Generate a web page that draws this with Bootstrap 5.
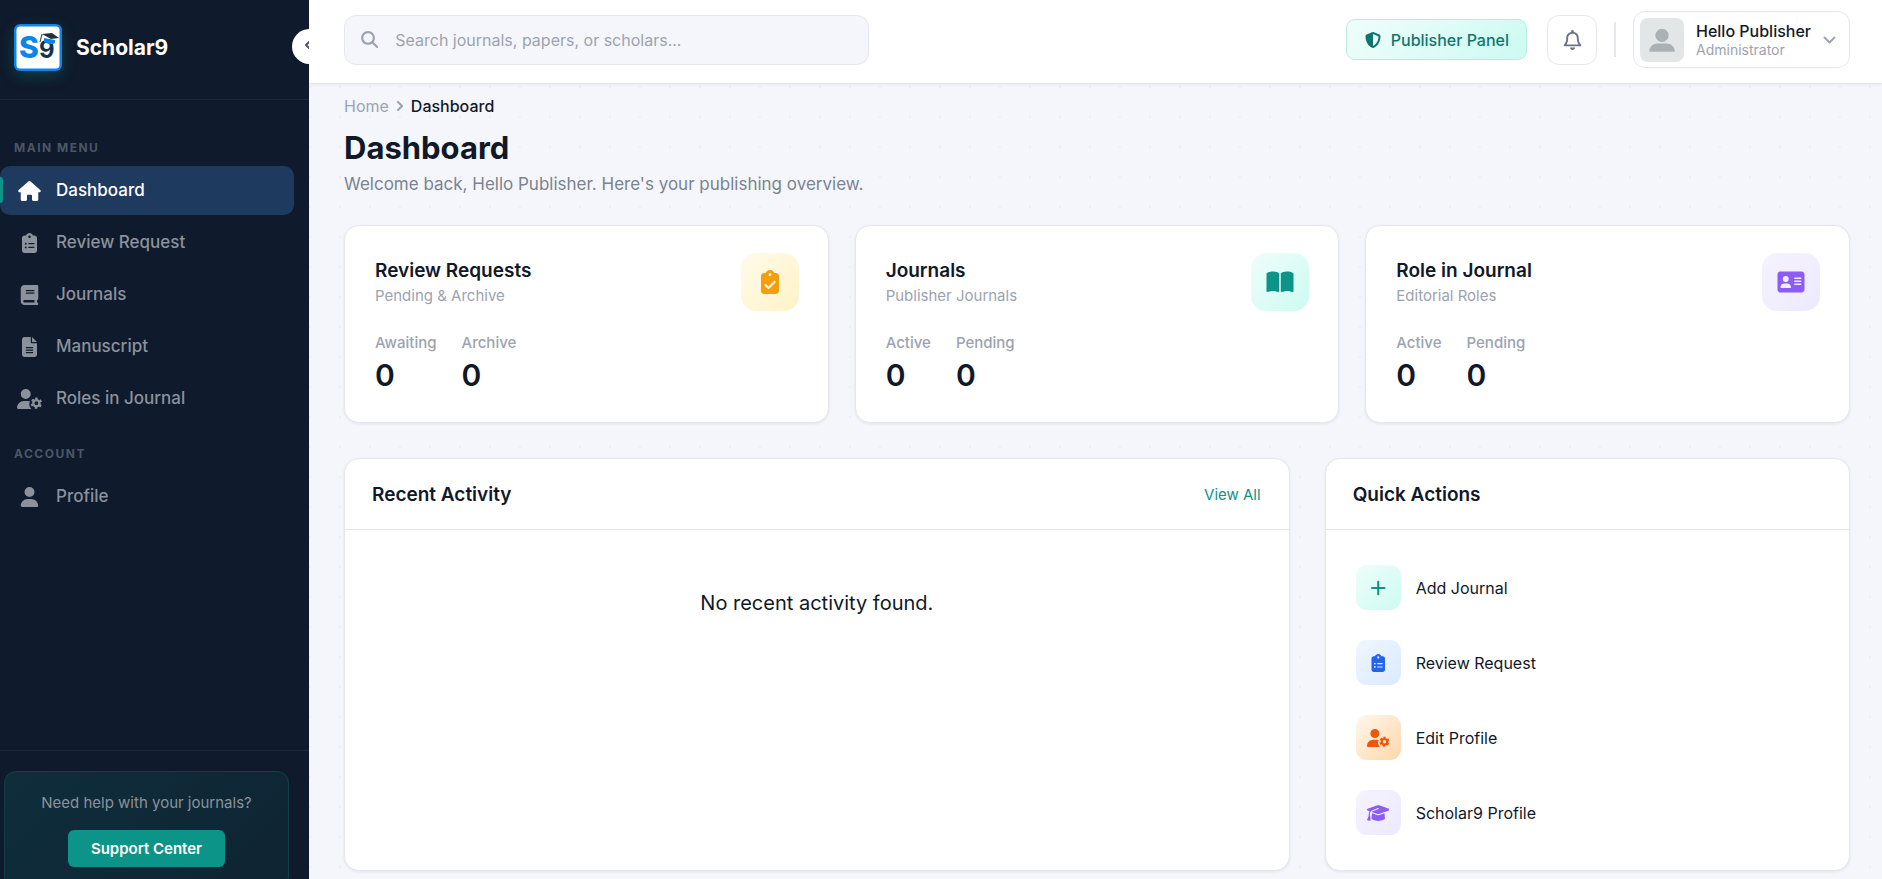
<!DOCTYPE html>
<html lang="en">
<head>
<meta charset="utf-8">
<meta name="viewport" content="width=device-width, initial-scale=1">
<title>Scholar9 – Dashboard</title>
<link href="https://cdn.jsdelivr.net/npm/bootstrap@5.3.0/dist/css/bootstrap.min.css" rel="stylesheet">
<style>
  :root { --ink: #111827; --muted: #9ca3af; --line: #e5e7eb; --teal: #0d9488; --navy: #0f1a2c; }
  body {
    font-family: Inter, "Liberation Sans", sans-serif; font-size: 16px; color: var(--ink);
    background: #f4f6fb radial-gradient(circle, rgba(15,26,44,.03) 1px, transparent 1px) -5px 12px / 30px 30px;
  }
  a { text-decoration: none; }
  .ico { width: 1.25em; height: 1em; fill: currentColor; flex: none; display: block; }

  /* Sidebar */
  .sidebar { width: 309px; height: calc(100vh + 30px); background: var(--navy); flex: none; }
  .brand { height: 100px; padding: 0 14px 4px; gap: 14px; border-bottom: 1px solid #1c283a; }
  .brand-mark { width: 48px; height: 47px; border-radius: 6px; box-shadow: 0 5px 15px rgba(13,148,136,.3); }
  .brand-name { font-size: 21px; font-weight: 700; line-height: 28px; color: #fff; }
  .collapse-btn {
    top: 29px; right: -18px; width: 35px; height: 35px; border: 0; border-radius: 50%;
    background: #fff; color: #4b5563; padding: 0 0 4px 13px;
  }
  .side-nav { padding-top: 40px; }
  .side-label { font-size: 12px; line-height: 16px; font-weight: 700; letter-spacing: 1.5px; color: #4c5665; padding-left: 14px; margin: 0 0 10px; }
  .side-list { gap: 3px; margin-bottom: 23px; }
  .side-item {
    height: 49px; margin-right: 15px; padding-left: 17px; gap: 14px; border-radius: 10px;
    font-size: 17px; font-weight: 500; color: #8b929c; position: relative;
  }
  .side-item .ico { font-size: 20px; }
  .side-item.current { background: #1e3a5f; color: #fff; }
  .side-item.current::before {
    content: ""; position: absolute; left: 0; top: 11px; bottom: 12px; width: 3px;
    background: var(--teal); border-radius: 0 3px 3px 0;
  }
  .side-foot { border-top: 1px solid #1c283a; padding: 20px 20px 20px 4px; }
  .help-box {
    border: 1px solid #113f49; border-radius: 12px; padding: 21px 15px;
    background: linear-gradient(135deg, rgba(13,148,136,.16), rgba(13,148,136,.08));
    color: #8b929c; font-size: 15px; line-height: 20px;
  }
  .help-btn { width: 157px; height: 37px; margin-top: 17px; border-radius: 6px; background: var(--teal); color: #fff; font-size: 15px; font-weight: 600; line-height: 35px; padding: 0; }

  /* Top bar */
  .topbar { background: #fff; border-bottom: 1px solid var(--line); box-shadow: 0 1px 3px rgba(15,26,44,.06); padding: 11px 32px 15px 35px; gap: 20px; }
  .search { width: 525px; height: 50px; border: 1px solid var(--line); border-radius: 12px; background: #f4f6fb; padding-left: 14px; gap: 15px; color: var(--muted); }
  .search .ico { font-size: 17px; }
  .search input { border: 0; background: none; outline: 0; font-size: 16px; color: var(--ink); padding: 0; }
  .search input::placeholder { color: var(--muted); opacity: 1; }
  .panel-btn {
    height: 41px; padding: 0 17px 0 16px; gap: 8px; border: 1px solid #b9ebe3; border-radius: 9px;
    background: linear-gradient(135deg, #f0fdfa, #ccfbf1); color: #0f766e; font-size: 16px; font-weight: 500;
  }
  .bell-btn { width: 50px; height: 50px; border: 1px solid var(--line); border-radius: 12px; background: #fff; color: #6b7280; font-size: 20px; }
  .rule { width: 2px; height: 35px; background: var(--line); margin: 0 -3px; }
  .user-btn { height: 57px; border: 1px solid var(--line); border-radius: 12px; background: #fff; padding: 0 13px 0 6px; gap: 12px; }
  .avatar { width: 44px; height: 44px; border-radius: 8px; background: #e3e6e6; }
  .user-name { font-size: 16px; line-height: 20px; font-weight: 500; color: var(--ink); }
  .user-role { font-size: 14px; line-height: 18px; color: var(--muted); }

  /* Page */
  .page { padding: 10px 32px 9px 35px; }
  .crumbs { font-size: 16px; line-height: 24px; gap: 8px; }
  .crumbs a, .crumbs svg { color: var(--muted); }
  .crumb-here { font-weight: 500; }
  .page-title { font-size: 31px; line-height: 36px; font-weight: 700; margin: 12px 0 6px; }
  .page-sub { font-size: 17px; line-height: 24px; color: #7b8390; margin: 0 0 29px; }
  .panel { background: #fff; border: 1px solid var(--line); border-radius: 15px; box-shadow: 0 1px 3px rgba(15,26,44,.08); }
  .stats { --bs-gutter-x: 26px; margin-bottom: 35px; }
  .stat { padding: 27px 29px 29px 30px; }
  .stat-title { font-size: 19px; line-height: 28px; font-weight: 600; margin: 0; }
  .stat-sub { font-size: 15px; line-height: 22px; color: var(--muted); margin: 0; }
  .tile { width: 58px; height: 58px; border-radius: 15px; font-size: 24px; }
  .tile-sm { width: 45px; height: 45px; border-radius: 11px; font-size: 18px; }
  .figures { gap: 25px; margin: 22px 0 0; }
  .figures dt { font-size: 15px; line-height: 20px; font-weight: 500; color: var(--muted); }
  .figures dd { font-size: 30px; line-height: 36px; font-weight: 600; margin: 4px 0 0; }
  .t-amber { background: linear-gradient(135deg, #fffbeb, #fef3c7); color: #f59e0b; }
  .t-teal { background: linear-gradient(135deg, #f0fdfa, #ccfbf1); color: var(--teal); }
  .t-violet { background: linear-gradient(135deg, #f5f3ff, #ede9fe); color: #8b5cf6; }
  .t-blue { background: linear-gradient(135deg, #eff6ff, #dbeafe); color: #2563eb; }
  .t-orange { background: linear-gradient(135deg, #fff7ed, #fed7aa); color: #ea580c; }
  .lower { display: grid; grid-template-columns: 1.8fr 1fr; gap: 35px; }
  .panel-head { height: 71px; padding: 2px 28px 0 27px; border-bottom: 1px solid var(--line); }
  .panel-head h2 { font-size: 19px; line-height: 26px; font-weight: 600; margin: 0; }
  .panel-head a { font-size: 15px; line-height: 26px; color: var(--teal); }
  .empty { font-size: 20px; line-height: 24px; padding-top: 61px; }
  .actions { padding: 20px; }
  .action { padding: 15px 10px; gap: 15px; font-size: 16px; color: var(--ink); }
</style>
</head>
<body>
<svg class="d-none" aria-hidden="true">
  <symbol id="i-house" viewBox="0 0 576 512"><path d="M575.8 255.5c0 18-15 32.1-32 32.1h-32l.7 160.2c0 2.7-.2 5.4-.5 8.1V472c0 22.1-17.9 40-40 40H392c-22.1 0-40-17.9-40-40V384c0-17.7-14.3-32-32-32H256c-17.7 0-32 14.3-32 32v88c0 22.1-17.9 40-40 40H104c-22.1 0-40-17.9-40-40V287.6H32c-18 0-32-14-32-32.1c0-9 3-17 10-24L266.4 8c7-7 15-8 22-8s15 2 21 7L564.8 231.5c8 7 12 15 11 24z"/></symbol>
  <symbol id="i-list" viewBox="0 0 384 512"><path fill-rule="evenodd" d="M192 0c-41.8 0-77.4 26.7-90.5 64H64C28.7 64 0 92.7 0 128V448c0 35.3 28.7 64 64 64H320c35.3 0 64-28.7 64-64V128c0-35.3-28.7-64-64-64H282.5C269.4 26.7 233.8 0 192 0zm0 64a32 32 0 1 1 0 64 32 32 0 1 1 0-64zM72 272a24 24 0 1 1 48 0 24 24 0 1 1-48 0zm104-16H304c8.8 0 16 7.2 16 16s-7.2 16-16 16H176c-8.8 0-16-7.2-16-16s7.2-16 16-16zM72 368a24 24 0 1 1 48 0 24 24 0 1 1-48 0zm88 0c0-8.8 7.2-16 16-16H304c8.8 0 16 7.2 16 16s-7.2 16-16 16H176c-8.8 0-16-7.2-16-16z"/></symbol>
  <symbol id="i-check" viewBox="0 0 384 512"><path fill-rule="evenodd" d="M192 0c-41.8 0-77.4 26.7-90.5 64H64C28.7 64 0 92.7 0 128V448c0 35.3 28.7 64 64 64H320c35.3 0 64-28.7 64-64V128c0-35.3-28.7-64-64-64H282.5C269.4 26.7 233.8 0 192 0zm0 64a32 32 0 1 1 0 64 32 32 0 1 1 0-64zM305 273L177 401c-9.4 9.4-24.6 9.4-33.9 0L79 337c-9.4-9.4-9.4-24.6 0-33.9s24.6-9.4 33.9 0l47 47L271 239c9.4-9.4 24.6-9.4 33.9 0s9.4 24.6 0 33.9z"/></symbol>
  <symbol id="i-book" viewBox="0 0 448 512"><path fill-rule="evenodd" d="M96 0C43 0 0 43 0 96V416c0 53 43 96 96 96H416c17.7 0 32-14.3 32-32s-14.3-32-32-32V384c17.7 0 32-14.3 32-32V32c0-17.7-14.3-32-32-32H96zm0 384H352v64H96c-17.7 0-32-14.3-32-32s14.3-32 32-32zm32-240c0-8.8 7.2-16 16-16H336c8.8 0 16 7.2 16 16s-7.2 16-16 16H144c-8.8 0-16-7.2-16-16zm16 48H336c8.8 0 16 7.2 16 16s-7.2 16-16 16H144c-8.8 0-16-7.2-16-16s7.2-16 16-16z"/></symbol>
  <symbol id="i-file" viewBox="0 0 384 512"><path fill-rule="evenodd" d="M64 0C28.7 0 0 28.7 0 64V448c0 35.3 28.7 64 64 64H320c35.3 0 64-28.7 64-64V160H256c-17.7 0-32-14.3-32-32V0H64zM256 0V128H384L256 0zM112 256H272c8.8 0 16 7.2 16 16s-7.2 16-16 16H112c-8.8 0-16-7.2-16-16s7.2-16 16-16zm0 64H272c8.8 0 16 7.2 16 16s-7.2 16-16 16H112c-8.8 0-16-7.2-16-16s7.2-16 16-16zm0 64H272c8.8 0 16 7.2 16 16s-7.2 16-16 16H112c-8.8 0-16-7.2-16-16s7.2-16 16-16z"/></symbol>
  <symbol id="i-user" viewBox="0 0 448 512"><path d="M224 256A128 128 0 1 0 224 0a128 128 0 1 0 0 256zm-45.7 48C79.8 304 0 383.8 0 482.3C0 498.7 13.3 512 29.7 512H418.3c16.4 0 29.7-13.3 29.7-29.7C448 383.8 368.2 304 269.7 304H178.3z"/></symbol>
  <symbol id="i-gear" viewBox="0 0 640 512"><path d="M224 256A128 128 0 1 0 224 0a128 128 0 1 0 0 256zM178.3 304h91.4c22 0 43 4 62 11a172 172 0 0 0 38 197H29.7C13.3 512 0 498.7 0 482.3C0 383.8 79.8 304 178.3 304z"/><circle cx="496" cy="363" r="79" fill="none" stroke="currentColor" stroke-width="62"/><circle cx="496" cy="363" r="122" fill="none" stroke="currentColor" stroke-width="46" pathLength="12" stroke-dasharray="1 1" transform="rotate(-105 496 363)"/></symbol>
  <symbol id="i-open" viewBox="0 0 576 512"><path d="M249.6 471.5c10.8 3.8 22.4-4.1 22.4-15.5V78.6c0-4.2-1.6-8.4-5-11C247.4 52 202.4 32 144 32C93.5 32 46.3 45.3 18.1 56.1C6.8 60.5 0 71.7 0 83.8V454.1c0 11.9 12.8 20.2 24.1 16.5C55.6 460.1 105.5 448 144 448c33.9 0 79 14 105.6 23.5zm76.8 0C353 462 398.1 448 432 448c38.5 0 88.4 12.1 119.9 22.6c11.3 3.8 24.1-4.6 24.1-16.5V83.8c0-12.1-6.8-23.3-18.1-27.6C529.7 45.3 482.5 32 432 32c-58.4 0-103.4 20-123 35.6c-3.3 2.6-5 6.8-5 11V456c0 11.4 11.7 19.3 22.4 15.5z"/></symbol>
  <symbol id="i-card" viewBox="0 0 576 512"><path fill-rule="evenodd" d="M64 32C28.7 32 0 60.7 0 96V416c0 35.3 28.7 64 64 64H512c35.3 0 64-28.7 64-64V96c0-35.3-28.7-64-64-64H64zm80 256h64c44.2 0 80 35.8 80 80c0 8.8-7.2 16-16 16H80c-8.8 0-16-7.2-16-16c0-44.2 35.8-80 80-80zm-32-96a64 64 0 1 1 128 0 64 64 0 1 1-128 0zm256-32H496c8.8 0 16 7.2 16 16s-7.2 16-16 16H368c-8.8 0-16-7.2-16-16s7.2-16 16-16zm0 64H496c8.8 0 16 7.2 16 16s-7.2 16-16 16H368c-8.8 0-16-7.2-16-16s7.2-16 16-16zm0 64H496c8.8 0 16 7.2 16 16s-7.2 16-16 16H368c-8.8 0-16-7.2-16-16s7.2-16 16-16z"/></symbol>
  <symbol id="i-shield" viewBox="0 0 512 512"><path fill-rule="evenodd" d="M256 0c4.6 0 9.2 1 13.4 2.9L457.7 82.8c22 9.3 38.4 31 38.3 57.2c-.5 99.2-41.3 280.7-213.6 363.2c-16.7 8-36.1 8-52.8 0C57.3 420.7 16.5 239.2 16 140c-.1-26.2 16.3-47.9 38.3-57.2L242.7 2.9C246.8 1 251.4 0 256 0zm0 66.8V444.8C394 378 431.1 230.1 432 141.4L256 66.8z"/></symbol>
  <symbol id="i-bell" viewBox="0 0 448 512"><path fill-rule="evenodd" d="M224 0c-17.7 0-32 14.3-32 32V49.9C119.5 61.4 64 124.2 64 200v33.4c0 45.4-15.5 89.5-43.8 124.9L5.3 377c-5.8 7.2-6.9 17.1-2.9 25.4S14.8 416 24 416H424c9.2 0 17.6-5.3 21.6-13.6s2.9-18.2-2.9-25.4l-14.9-18.6C399.5 322.9 384 278.8 384 233.4V200c0-75.8-55.5-138.6-128-150.1V32c0-17.7-14.3-32-32-32zm0 96h8c57.4 0 104 46.6 104 104v33.4c0 47.9 13.9 94.6 39.7 134.6H72.3C98.1 328 112 281.3 112 233.4V200c0-57.4 46.6-104 104-104h8zm64 352H160c0 17 6.7 33.3 18.7 45.3s28.3 18.7 45.3 18.7s33.3-6.7 45.3-18.7s18.7-28.3 18.7-45.3z"/></symbol>
  <symbol id="i-search" viewBox="0 0 512 512"><path fill-rule="evenodd" d="M416 208c0 45.9-14.9 88.3-40 122.7L502.6 457.4c12.5 12.5 12.5 32.8 0 45.3s-32.8 12.5-45.3 0L330.7 376c-34.4 25.2-76.8 40-122.7 40C93.1 416 0 322.9 0 208S93.1 0 208 0S416 93.1 416 208zM208 352a144 144 0 1 0 0-288 144 144 0 1 0 0 288z"/></symbol>
  <symbol id="i-plus" viewBox="0 0 448 512"><path d="M224 80V432M48 256H400" fill="none" stroke="currentColor" stroke-width="60" stroke-linecap="round"/></symbol>
  <symbol id="i-cap" viewBox="0 0 640 512"><path d="M320 32c-8.1 0-16.1 1.4-23.7 4.1L15.8 137.4C6.3 140.9 0 149.9 0 160s6.3 19.1 15.8 22.6l57.9 20.9C57.3 229.3 48 259.8 48 291.9v28.1c0 28.4-10.8 57.7-22.3 80.8c-6.5 13-13.9 25.8-22.5 37.6C0 442.7-.9 448.3 .9 453.4s6 8.9 11.2 10.2l64 16c4.2 1.1 8.7 .3 12.4-2s6.3-6.1 7.1-10.4c8.6-42.8 4.3-81.2-2.1-108.7C90.3 344.3 86 329.8 80 316.5V291.9c0-30.2 10.2-58.7 27.9-81.5c12.9-15.5 29.6-28 49.2-35.7l157-61.7c8.2-3.2 17.5 .8 20.7 9s-.8 17.5-9 20.7l-157 61.7c-12.4 4.9-23.3 12.4-32.2 21.6l159.6 57.6c7.6 2.7 15.6 4.1 23.7 4.1s16.1-1.4 23.7-4.1L624.2 182.6c9.5-3.4 15.8-12.5 15.8-22.6s-6.3-19.1-15.8-22.6L343.7 36.1C336.1 33.4 328.1 32 320 32zM128 408c0 35.3 86 72 192 72s192-36.7 192-72L496.7 262.6 354.5 314c-11.1 4-22.8 6-34.5 6s-23.5-2-34.5-6L143.3 262.6 128 408z"/></symbol>
</svg>

<div class="d-flex vh-100 overflow-hidden">
  <aside class="sidebar d-flex flex-column position-relative overflow-hidden">
    <div class="brand d-flex align-items-center">
      <svg class="brand-mark" viewBox="0 0 48 47" role="img" aria-label="Scholar9 logo">
        <rect x="1" y="1" width="46" height="45" rx="5" fill="#fff" stroke="#0b84ee" stroke-width="3"/>
        <text x="5" y="34" font-family="Inter" font-weight="800" font-size="30" fill="#0b84ee">S</text>
        <text x="25" y="34" font-family="Inter" font-weight="700" font-size="24" fill="#16324a">9</text>
        <path d="M30 14l11 2v3c-3 2-8 1-11-1z" fill="#0b84ee"/>
        <path d="M28 10l10-1 7 5-8 1z" fill="#22333f"/>
        <path d="M28 10l-2 8" stroke="#22333f" stroke-width="1" fill="none"/>
      </svg>
      <span class="brand-name">Scholar9</span>
    </div>
    <button class="collapse-btn position-absolute d-flex align-items-center" type="button" aria-label="Collapse sidebar">
      <svg width="7" height="8" viewBox="0 0 7 8" fill="none" stroke="currentColor" stroke-width="2" stroke-linecap="round" stroke-linejoin="round"><path d="M4 1L1 4l3 3"/></svg>
    </button>
    <nav class="side-nav flex-grow-1">
      <p class="side-label">MAIN MENU</p>
      <div class="side-list d-flex flex-column">
        <a class="side-item current d-flex align-items-center" href="#"><svg class="ico"><use href="#i-house"/></svg>Dashboard</a>
        <a class="side-item d-flex align-items-center" href="#"><svg class="ico"><use href="#i-list"/></svg>Review Request</a>
        <a class="side-item d-flex align-items-center" href="#"><svg class="ico"><use href="#i-book"/></svg>Journals</a>
        <a class="side-item d-flex align-items-center" href="#"><svg class="ico"><use href="#i-file"/></svg>Manuscript</a>
        <a class="side-item d-flex align-items-center" href="#"><svg class="ico"><use href="#i-gear"/></svg>Roles in Journal</a>
      </div>
      <p class="side-label">ACCOUNT</p>
      <a class="side-item d-flex align-items-center" href="#"><svg class="ico"><use href="#i-user"/></svg>Profile</a>
    </nav>
    <div class="side-foot">
      <div class="help-box text-center">
        <div>Need help with your journals?</div>
        <a class="btn help-btn" href="#">Support Center</a>
      </div>
    </div>
  </aside>

  <div class="flex-grow-1 overflow-hidden">
    <header class="topbar d-flex align-items-center">
      <label class="search d-flex align-items-center me-auto">
        <svg class="ico"><use href="#i-search"/></svg>
        <input class="flex-grow-1" type="search" placeholder="Search journals, papers, or scholars..." aria-label="Search">
      </label>
      <a class="panel-btn d-flex align-items-center" href="#"><svg class="ico"><use href="#i-shield"/></svg>Publisher Panel</a>
      <button class="bell-btn d-flex align-items-center justify-content-center p-0" type="button" aria-label="Notifications"><svg class="ico"><use href="#i-bell"/></svg></button>
      <div class="rule"></div>
      <button class="user-btn d-flex align-items-center text-start" type="button">
        <svg class="avatar" viewBox="0 0 43 43" aria-hidden="true"><circle cx="21.5" cy="17" r="6.5" fill="#aab2b5"/><path d="M9 33c0-5 4-8 8-8h9c4 0 8 3 8 8z" fill="#aab2b5"/></svg>
        <span class="d-flex flex-column"><span class="user-name">Hello Publisher</span><span class="user-role">Administrator</span></span>
        <svg width="13" height="8" viewBox="0 0 13 8" fill="none" stroke="#9ca3af" stroke-width="2" stroke-linecap="round" stroke-linejoin="round"><path d="M1.5 1.5l5 5 5-5"/></svg>
      </button>
    </header>

    <main class="page">
      <nav class="crumbs d-flex align-items-center" aria-label="Breadcrumb">
        <a href="#">Home</a>
        <svg width="6" height="11" viewBox="0 0 6 11" fill="none" stroke="currentColor" stroke-width="2" stroke-linecap="round" stroke-linejoin="round"><path d="M1 1l4 4-4 4"/></svg>
        <span class="crumb-here">Dashboard</span>
      </nav>
      <h1 class="page-title">Dashboard</h1>
      <p class="page-sub">Welcome back, Hello Publisher. Here's your publishing overview.</p>

      <div class="row stats">
        <div class="col-4">
          <section class="panel stat">
            <div class="d-flex align-items-center justify-content-between">
              <div><h2 class="stat-title">Review Requests</h2><p class="stat-sub">Pending &amp; Archive</p></div>
              <div class="tile t-amber d-flex align-items-center justify-content-center"><svg class="ico"><use href="#i-check"/></svg></div>
            </div>
            <dl class="figures d-flex"><div><dt>Awaiting</dt><dd>0</dd></div><div><dt>Archive</dt><dd>0</dd></div></dl>
          </section>
        </div>
        <div class="col-4">
          <section class="panel stat">
            <div class="d-flex align-items-center justify-content-between">
              <div><h2 class="stat-title">Journals</h2><p class="stat-sub">Publisher Journals</p></div>
              <div class="tile t-teal d-flex align-items-center justify-content-center"><svg class="ico"><use href="#i-open"/></svg></div>
            </div>
            <dl class="figures d-flex"><div><dt>Active</dt><dd>0</dd></div><div><dt>Pending</dt><dd>0</dd></div></dl>
          </section>
        </div>
        <div class="col-4">
          <section class="panel stat">
            <div class="d-flex align-items-center justify-content-between">
              <div><h2 class="stat-title">Role in Journal</h2><p class="stat-sub">Editorial Roles</p></div>
              <div class="tile t-violet d-flex align-items-center justify-content-center"><svg class="ico"><use href="#i-card"/></svg></div>
            </div>
            <dl class="figures d-flex"><div><dt>Active</dt><dd>0</dd></div><div><dt>Pending</dt><dd>0</dd></div></dl>
          </section>
        </div>
      </div>

      <div class="lower">
        <section class="panel">
          <div class="panel-head d-flex align-items-center justify-content-between"><h2>Recent Activity</h2><a href="#">View All</a></div>
          <p class="empty text-center mb-0">No recent activity found.</p>
        </section>
        <section class="panel">
          <div class="panel-head d-flex align-items-center"><h2>Quick Actions</h2></div>
          <div class="actions">
            <a class="action d-flex align-items-center" href="#"><span class="tile-sm t-teal d-flex align-items-center justify-content-center"><svg class="ico"><use href="#i-plus"/></svg></span>Add Journal</a>
            <a class="action d-flex align-items-center" href="#"><span class="tile-sm t-blue d-flex align-items-center justify-content-center"><svg class="ico"><use href="#i-list"/></svg></span>Review Request</a>
            <a class="action d-flex align-items-center" href="#"><span class="tile-sm t-orange d-flex align-items-center justify-content-center"><svg class="ico"><use href="#i-gear"/></svg></span>Edit Profile</a>
            <a class="action d-flex align-items-center" href="#"><span class="tile-sm t-violet d-flex align-items-center justify-content-center"><svg class="ico"><use href="#i-cap"/></svg></span>Scholar9 Profile</a>
          </div>
        </section>
      </div>
    </main>
  </div>
</div>
<script src="https://cdn.jsdelivr.net/npm/bootstrap@5.3.0/dist/js/bootstrap.bundle.min.js"></script>
</body>
</html>
